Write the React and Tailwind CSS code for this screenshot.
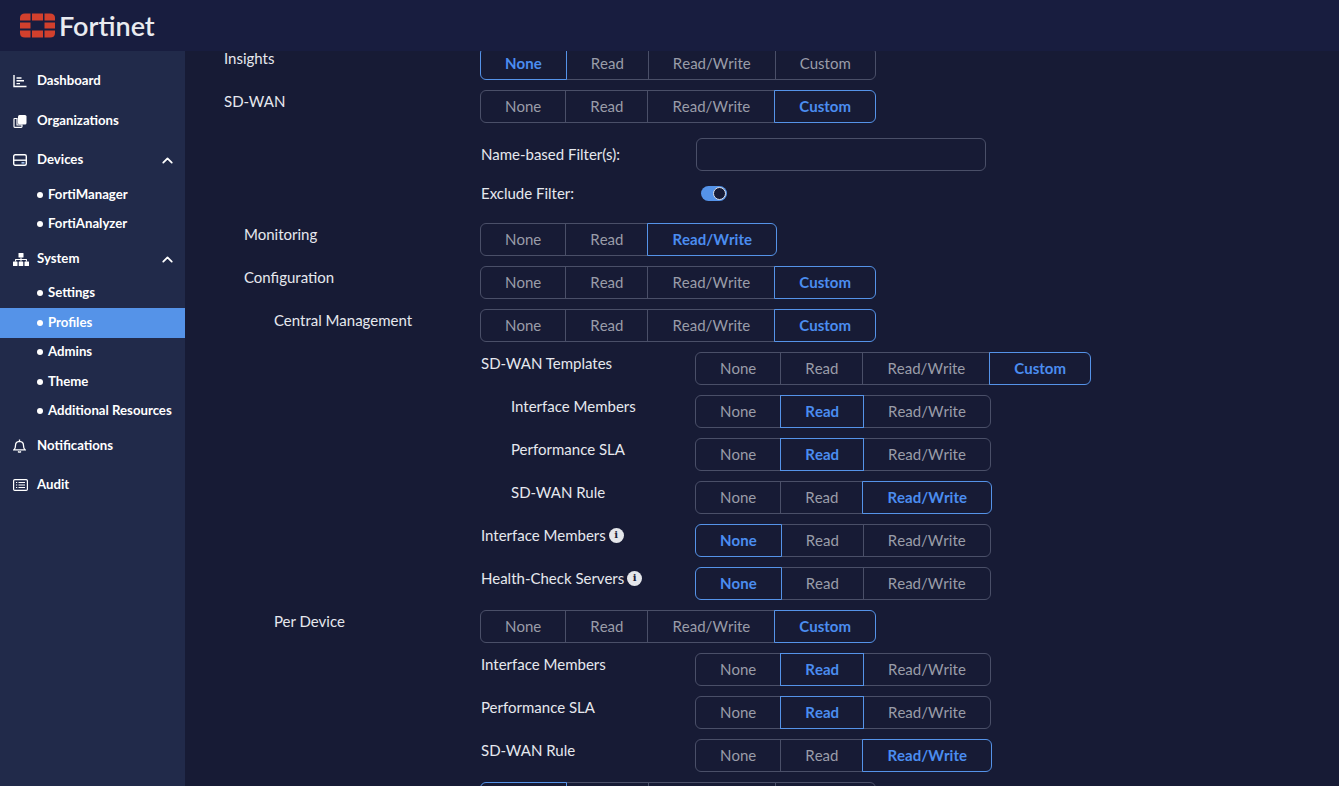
import React from "react";
import { ChevronUp } from "lucide-react";

function FortinetLogo() {
  return (
    <svg width="35" height="25" viewBox="0 0 35 25" fill="#d2402d">
      <path d="M0 7.500V5Q0 .5 5 .5H10.500V7.500Z" />
      <path d="M12 .5H23V7.500H12Z" />
      <path d="M24.500 .5H30Q35 .5 35 5V7.500H24.500Z" />
      <path d="M0 9.500H10.500V15.500H0Z" />
      <path d="M24.500 9.500H35V15.500H24.500Z" />
      <path d="M0 17.500H10.500V24.500H5Q0 24.500 0 20Z" />
      <path d="M12 17.500H23V24.500H12Z" />
      <path d="M24.500 17.500H35V20Q35 24.500 30 24.500H24.500Z" />
    </svg>
  );
}

function DashIcon() {
  return (
    <svg width="14" height="14" viewBox="0 0 14 14" fill="none" stroke="#fff" strokeWidth="1.400">
      <path d="M1 1V12.500H13.500" />
      <path d="M3.500 4H8.500M3.500 6.800H11M3.500 9.600H7" />
    </svg>
  );
}

function OrgIcon() {
  return (
    <svg width="14" height="14" viewBox="0 0 14 14">
      <path d="M1.500 4.500H4V11H9V12.500Q9 13.300 8.200 13.300H1.800Q1 13.300 1 12.500V5Q1 4.500 1.500 4.500Z" fill="none" stroke="#fff" strokeWidth="1.200" />
      <rect x="5" y="1" width="8.500" height="9.500" rx="1.500" fill="#fff" />
    </svg>
  );
}

function DeviceIcon() {
  return (
    <svg width="14" height="12" viewBox="0 0 14 12" fill="none" stroke="#fff" strokeWidth="1.400">
      <rect x=".7" y=".7" width="12.600" height="10.600" rx="1.500" />
      <path d="M.7 6.200H13.300" />
      <path d="M8.500 8.800H11.500" strokeWidth="1.600" stroke="#9fc0ee" />
    </svg>
  );
}

function SitemapIcon() {
  return (
    <svg width="16" height="13" viewBox="0 0 16 13" fill="#fff">
      <rect x="5.500" y="0" width="5" height="4.500" rx=".6" />
      <rect x="0" y="8.500" width="4.500" height="4.500" rx=".6" />
      <rect x="5.750" y="8.500" width="4.500" height="4.500" rx=".6" />
      <rect x="11.500" y="8.500" width="4.500" height="4.500" rx=".6" />
      <path d="M7.500 4.500H8.500V6H13.900V8.500H12.900V7H8.500V8.500H7.500V7H3.100V8.500H2.100V6H7.500Z" />
    </svg>
  );
}

function BellIcon() {
  return (
    <svg width="13" height="14" viewBox="0 0 13 14" fill="none" stroke="#fff" strokeWidth="1.300">
      <path d="M1 10.800Q2.500 9.500 2.500 6.500Q2.500 2.500 6.500 2.300Q10.500 2.500 10.500 6.500Q10.500 9.500 12 10.800Z" />
      <path d="M6.500 .5V2.300" />
      <path d="M5 12.500Q6.500 13.800 8 12.500" />
    </svg>
  );
}

function AuditIcon() {
  return (
    <svg width="15" height="12" viewBox="0 0 15 12" fill="none" stroke="#fff" strokeWidth="1.200">
      <rect x=".6" y=".6" width="13.800" height="10.800" rx="1.200" />
      <path d="M3 3.500H4.200M5.500 3.500H12M3 6H4.200M5.500 6H12M3 8.500H4.200M5.500 8.500H12" />
    </svg>
  );
}

function InfoIcon() {
  return (
    <span className="ml-[3px] inline-flex h-[15px] w-[15px] items-center justify-center rounded-full bg-[#e4e6ea] font-['DejaVu_Serif',serif] text-[10px] font-bold leading-none text-[#171b35]">
      i
    </span>
  );
}

function TopItem({ icon, label, open, className = "" }) {
  return (
    <div className={`flex h-[30px] items-center pr-[9px] pl-[13px] ${className}`}>
      <span className="flex w-[24px] justify-start">{icon}</span>
      <span className="flex-1 text-[13.200px] font-bold text-white">{label}</span>
      {open && <ChevronUp size={17} strokeWidth={2.500} className="text-white" />}
    </div>
  );
}

function SubItem({ label, active }) {
  return (
    <div className={`flex h-[29.500px] items-center pl-[37px] ${active ? "bg-[#5593e8]" : ""}`}>
      <span className="mr-[5px] h-[6px] w-[6px] rounded-full bg-white" />
      <span className="text-[13.200px] font-bold text-white">{label}</span>
    </div>
  );
}

function Sidebar() {
  return (
    <aside className="w-[185px] shrink-0 bg-[#212a4a] pt-[15px]">
      <TopItem icon={<DashIcon />} label="Dashboard" />
      <TopItem icon={<OrgIcon />} label="Organizations" className="mt-[10px]" />
      <TopItem icon={<DeviceIcon />} label="Devices" open className="mt-[9px]" />
      <div className="mt-[5px]">
        <SubItem label="FortiManager" />
        <SubItem label="FortiAnalyzer" />
      </div>
      <TopItem icon={<SitemapIcon />} label="System" open className="mt-[5px]" />
      <div className="mt-[4.500px]">
        <SubItem label="Settings" />
        <SubItem label="Profiles" active />
        <SubItem label="Admins" />
        <SubItem label="Theme" />
        <SubItem label="Additional Resources" />
      </div>
      <TopItem icon={<BellIcon />} label="Notifications" className="mt-[5px]" />
      <TopItem icon={<AuditIcon />} label="Audit" className="mt-[9px]" />
    </aside>
  );
}

function Segmented({ options, value }) {
  return (
    <div className="flex h-[33px] shrink-0 [font-kerning:none]">
      {options.map((opt, i) => {
        const on = opt === value;
        return (
          <div
            key={opt}
            className={`flex h-full items-center justify-center border px-[24px] text-[15px] ${i > 0 ? "-ml-px" : ""} ${i === 0 ? "rounded-l-[6px]" : ""} ${i === options.length - 1 ? "rounded-r-[6px]" : ""} ${
              on ? "relative z-10 border-[#5593e8] font-bold text-[#4b8df0]" : "border-[#4a4f68] text-[#9a9da9]"
            }`}
          >
            {opt}
          </div>
        );
      })}
    </div>
  );
}

const FOUR = ["None", "Read", "Read/Write", "Custom"];
const THREE = ["None", "Read", "Read/Write"];

// outer row: label in the left column, control starts at x=480
function Row({ label, value, indent = 0, options = FOUR, className = "mb-[10px]" }) {
  return (
    <div className={`flex h-[33px] ${className}`}>
      <div className="w-[256px] shrink-0 text-[15px] leading-[22px] text-[#e6e8ee]" style={{ paddingLeft: indent }}>
        {label}
      </div>
      <Segmented options={options} value={value} />
    </div>
  );
}

// nested row: label starts at x=481, control at x=695
function SubRow({ label, value, indent = 0, options = THREE, info }) {
  return (
    <div className="mb-[10px] flex h-[33px] pl-[257px]">
      <div className="flex h-[22px] w-[214px] shrink-0 items-center text-[15px] text-[#e6e8ee]" style={{ paddingLeft: indent }}>
        {label}
        {info && <InfoIcon />}
      </div>
      <Segmented options={options} value={value} />
    </div>
  );
}

export default function App() {
  return (
    <div className="flex h-[786px] w-[1339px] flex-col overflow-hidden bg-[#171b35] font-['Lato',sans-serif]">
      <header className="relative z-20 flex h-[51px] shrink-0 items-center bg-[#181d3f] pl-[20px]">
        <FortinetLogo />
        <span className="ml-[4px] text-[27px] font-semibold leading-none text-[#e9ebf0]">Fortinet</span>
      </header>
      <div className="flex min-h-0 flex-1">
        <Sidebar />
        <main className="min-w-0 flex-1 overflow-hidden pl-[39px]">
          <div className="mt-[-4px]">
            <Row label="Insights" value="None" />
            <Row label="SD-WAN" value="Custom" className="mb-[15px]" />
            <div className="flex h-[33px] items-center pl-[257px]">
              <span className="w-[215px] text-[15px] text-[#e6e8ee]">Name-based Filter(s):</span>
              <div className="h-[33px] w-[290px] rounded-[6px] border border-[#4a4f68]" />
            </div>
            <div className="mt-[6px] mb-[13px] flex h-[33px] items-center pl-[257px]">
              <span className="w-[220px] text-[15px] text-[#e6e8ee]">Exclude Filter:</span>
              <span className="flex h-[15px] w-[26px] items-center justify-end rounded-full bg-[#5593e8] pr-px">
                <span className="h-[13px] w-[13px] rounded-full border-[1.500px] border-[#dfe3ea] bg-[#171b35]" />
              </span>
            </div>
            <Row label="Monitoring" value="Read/Write" indent={20} options={THREE} />
            <Row label="Configuration" value="Custom" indent={20} />
            <Row label="Central Management" value="Custom" indent={50} />
            <SubRow label="SD-WAN Templates" value="Custom" options={FOUR} />
            <SubRow label="Interface Members" value="Read" indent={30} />
            <SubRow label="Performance SLA" value="Read" indent={30} />
            <SubRow label="SD-WAN Rule" value="Read/Write" indent={30} />
            <SubRow label="Interface Members" value="None" info />
            <SubRow label="Health-Check Servers" value="None" info />
            <Row label="Per Device" value="Custom" indent={50} />
            <SubRow label="Interface Members" value="Read" />
            <SubRow label="Performance SLA" value="Read" />
            <SubRow label="SD-WAN Rule" value="Read/Write" />
            <Row label="" value="None" indent={50} />
          </div>
        </main>
      </div>
    </div>
  );
}
